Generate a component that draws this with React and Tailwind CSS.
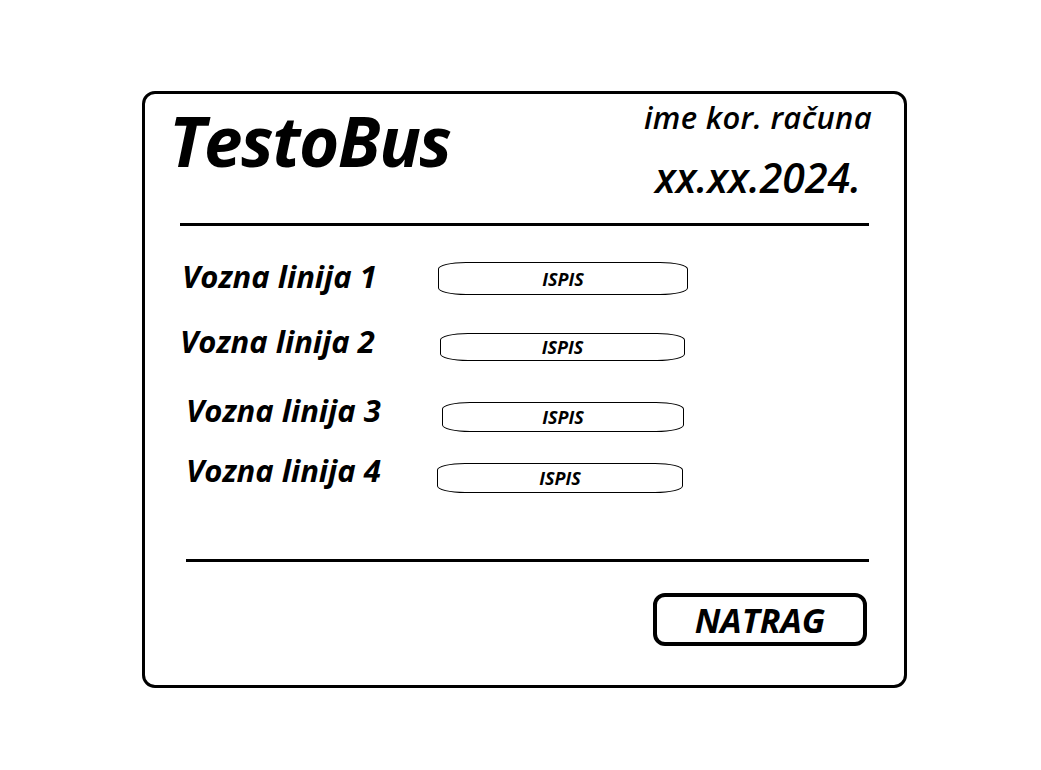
const linije = [
  { naziv: "Vozna linija 1", red: "mt-[35px] pl-[37px]", labela: "w-[256px]", gumb: "mt-[1px] w-[250px] h-[33px]" },
  { naziv: "Vozna linija 2", red: "mt-[31px] pl-[35px]", labela: "w-[260px]", gumb: "mt-[7px] w-[245px] h-[28px]" },
  { naziv: "Vozna linija 3", red: "mt-[34px] pl-[41px]", labela: "w-[256px]", gumb: "mt-[7px] w-[242px] h-[30px]" },
  { naziv: "Vozna linija 4", red: "mt-[23px] pl-[41px]", labela: "w-[251px]", gumb: "mt-[8px] w-[246px] h-[30px]" },
];

export default function App() {
  return (
    <div className="min-h-[770px] bg-white pt-[91px] font-['Open_Sans',sans-serif] italic text-black">
      <div className="ml-[142px] flex h-[597px] w-[765px] flex-col rounded-[13px] border-[3px] border-black">
        {/* zaglavlje */}
        <div className="flex h-[129px] items-start justify-between">
          <h1 className="ml-[24px] mt-[12px] text-[69px] font-bold leading-none tracking-[-1.5px]">TestoBus</h1>
          <div className="mr-[16px] flex w-[260px] flex-col items-center">
            <p className="mt-[8px] text-[31px] font-semibold leading-none tracking-[0.3px]">ime kor. računa</p>
            <p className="mt-[24px] text-[41px] font-semibold leading-none">xx.xx.2024.</p>
          </div>
        </div>
        <div className="ml-[35px] h-[3px] w-[689px] bg-black" />

        {/* vozne linije */}
        {linije.map((l) => (
          <div key={l.naziv} className={`flex items-start ${l.red}`}>
            <span className={`${l.labela} text-[31px] font-bold leading-none`}>{l.naziv}</span>
            <button
              className={`${l.gumb} flex items-center justify-center rounded-[28px/7px] border border-black text-[18px] font-bold leading-none`}
            >
              ISPIS
            </button>
          </div>
        ))}

        <div className="ml-[41px] mt-[66px] h-[3px] w-[683px] bg-black" />

        <div className="mt-[31px] flex justify-end pr-[37px]">
          <button className="flex h-[53px] w-[214px] items-center justify-center rounded-[12px] border-4 border-black text-[34px] font-bold leading-none">
            NATRAG
          </button>
        </div>
      </div>
    </div>
  );
}
